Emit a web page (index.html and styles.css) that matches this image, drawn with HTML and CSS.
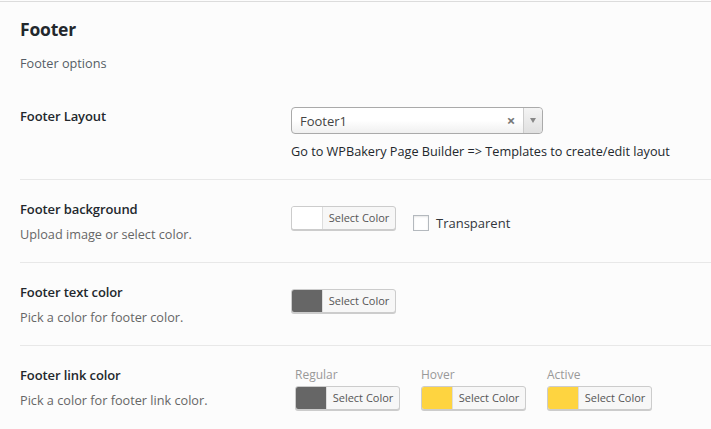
FILE: index.html
```html
<!DOCTYPE html>
<html>
<head>
<meta charset="utf-8">
<link rel="stylesheet" href="styles.css">
</head>
<body>
<div class="panel">
  <div class="head">
    <h2 class="title">Footer</h2>
    <p class="subtitle">Footer options</p>
  </div>

  <div class="row row-first">
    <div class="label-col">
      <div class="label">Footer Layout</div>
    </div>
    <div class="control-col control-select">
      <div class="select">
        <span class="select-value">Footer1</span>
        <span class="select-clear">×</span>
        <span class="select-arrow"><span class="tri"></span></span>
      </div>
      <div class="help">Go to WPBakery Page Builder =&gt; Templates to create/edit layout</div>
    </div>
  </div>

  <div class="row">
    <div class="label-col">
      <div class="label">Footer background</div>
      <div class="desc">Upload image or select color.</div>
    </div>
    <div class="control-col control-inline">
      <div class="color-btn"><span class="swatch sw-white"></span><span class="btn-text">Select Color</span></div>
      <label class="check"><span class="box"></span><span class="check-text">Transparent</span></label>
    </div>
  </div>

  <div class="row">
    <div class="label-col">
      <div class="label">Footer text color</div>
      <div class="desc">Pick a color for footer color.</div>
    </div>
    <div class="control-col control-inline">
      <div class="color-btn"><span class="swatch sw-dark"></span><span class="btn-text">Select Color</span></div>
    </div>
  </div>

  <div class="row">
    <div class="label-col">
      <div class="label">Footer link color</div>
      <div class="desc">Pick a color for footer link color.</div>
    </div>
    <div class="control-col control-groups">
      <div class="group">
        <div class="group-label">Regular</div>
        <div class="color-btn"><span class="swatch sw-dark"></span><span class="btn-text">Select Color</span></div>
      </div>
      <div class="group">
        <div class="group-label">Hover</div>
        <div class="color-btn"><span class="swatch sw-yellow"></span><span class="btn-text">Select Color</span></div>
      </div>
      <div class="group">
        <div class="group-label">Active</div>
        <div class="color-btn"><span class="swatch sw-yellow"></span><span class="btn-text">Select Color</span></div>
      </div>
    </div>
  </div>
</div>
</body>
</html>
```

FILE: styles.css
```css
html, body {
  margin: 0;
  padding: 0;
  background: #fcfcfc;
}
body {
  font-family: "Open Sans", "Noto Sans", Arial, sans-serif;
  color: #23282d;
}
.panel {
  margin-top: 1px;
  border-top: 1px solid #dcdcdc;
  min-height: 428px;
}
.head {
  padding: 15px 20px 0 20px;
  height: 69px;
}
.title {
  margin: 0;
  font-size: 17.5px;
  font-weight: 700;
  line-height: 24px;
  color: #23282d;
  letter-spacing: -0.2px;
}
.subtitle {
  margin: 12px 0 0 0;
  font-size: 12.7px;
  line-height: 20px;
  color: #555d66;
}
.row {
  display: grid;
  grid-template-columns: 271px 1fr;
  margin-left: 20px;
  padding: 19px 0 18px 0;
  border-top: 1px solid #e8e8e8;
}
.row-first {
  border-top: none;
  padding-top: 20px;
}
.label {
  font-size: 13px;
  font-weight: 600;
  line-height: 20px;
  color: #23282d;
  letter-spacing: -0.1px;
}
.desc {
  margin-top: 5px;
  font-size: 12.7px;
  line-height: 20px;
  color: #666;
}
.control-select {
  padding-top: 1px;
}
.select {
  width: 250px;
  height: 25px;
  border: 1px solid #aaa;
  border-radius: 4px;
  background: linear-gradient(#ffffff 0%, #ffffff 50%, #f0f0f0 100%);
  display: flex;
  align-items: center;
  box-sizing: content-box;
}
.select-value {
  flex: 1;
  padding-left: 8px;
  font-size: 13px;
  color: #444;
}
.select-clear {
  width: 14px;
  font-size: 15px;
  font-weight: 700;
  color: #777;
  margin-right: 5px;
  margin-left: 2px;
  text-align: center;
  line-height: 25px;
}
.select-arrow {
  width: 18px;
  height: 25px;
  border-left: 1px solid #ccc;
  border-radius: 0 4px 4px 0;
  background: linear-gradient(#f4f4f4, #e0e0e0);
  display: flex;
  align-items: center;
  justify-content: center;
}
.tri {
  width: 0;
  height: 0;
  border-left: 3px solid transparent;
  border-right: 3px solid transparent;
  border-top: 5px solid #888;
}
.help {
  margin-top: 7px;
  font-size: 12.7px;
  line-height: 20px;
  color: #23282d;
}
.control-inline {
  padding-top: 7px;
  display: flex;
  align-items: flex-start;
  gap: 17px;
}
.color-btn {
  display: flex;
  width: 103px;
  height: 22px;
  border: 1px solid #ccc;
  border-radius: 3px;
  background: #f7f7f7;
  box-shadow: 0 1px 0 #ccc;
  overflow: hidden;
  box-sizing: content-box;
}
.swatch {
  width: 30px;
  height: 22px;
  border-right: 1px solid #ddd;
}
.sw-white { background: #ffffff; }
.sw-dark { background: #666666; }
.sw-yellow { background: #fed440; }
.btn-text {
  flex: 1;
  text-align: center;
  font-size: 11px;
  line-height: 22px;
  color: #555;
}
.check {
  display: flex;
  align-items: center;
  gap: 7px;
  margin-top: 9px;
}
.box {
  width: 14px;
  height: 14px;
  border: 1px solid #b4b9be;
  background: #fff;
  box-shadow: inset 0 1px 2px rgba(0,0,0,0.1);
}
.check-text {
  font-size: 13px;
  line-height: 16px;
  color: #32373c;
}
.control-groups {
  display: flex;
  gap: 21px;
  padding-left: 4px;
}
.group-label {
  font-size: 12px;
  line-height: 20px;
  color: #999;
  margin-bottom: 1px;
}
```
